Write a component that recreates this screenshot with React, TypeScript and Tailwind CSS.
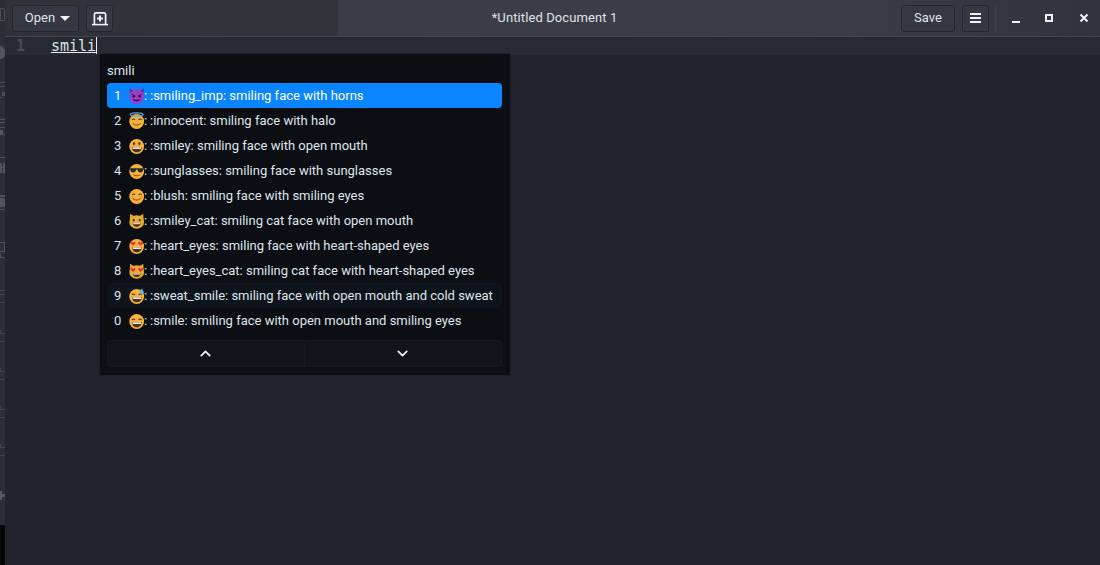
import { ChevronDown, ChevronUp } from "lucide-react";
import type { ReactNode } from "react";

const FaceBase = ({ children, fill = "#f7b23b" }: { children: ReactNode; fill?: string }) => (
  <svg viewBox="0 0 18 18" className="-mr-px h-[18px] w-[18px] shrink-0">
    <circle cx="8.7" cy="9.5" r="7.4" fill={fill} />
    {children}
  </svg>
);

const BigMouth = () => (
  <>
    <path d="M4 10.2h9.6c0 3-2 5-4.8 5s-4.8-2-4.8-5z" fill="#4a3320" />
    <path d="M4.6 10.4h8.4v1.5H4.6z" fill="#fff" />
  </>
);

const HappyEyes = () => (
  <path d="M4 8q1.5-2 3 0M10.6 8q1.5-2 3 0" fill="none" stroke="#4a3320" strokeWidth="1.1" />
);

const Hearts = () => (
  <path
    d="M5 8.8 2.7 6.6c-.9-1 .6-2.4 1.6-1.5l.7.6.7-.6c1-.9 2.5.5 1.6 1.5zM12.6 8.8l-2.3-2.2c-.9-1 .6-2.4 1.6-1.5l.7.6.7-.6c1-.9 2.5.5 1.6 1.5z"
    fill="#e8323c"
  />
);

const CatEars = ({ fill }: { fill: string }) => (
  <path d="M1.7 9 2.1 1.8 6.7 4.4h4l4.6-2.6L15.7 9z" fill={fill} />
);

const emojis: Record<string, ReactNode> = {
  smiling_imp: (
    <FaceBase fill="#9b3fc8">
      <path d="M2 6 1.4 1.6 5.4 3.6zM15.4 6l.6-4.4-4 2z" fill="#6a2a90" />
      <path d="M3.6 7.4 7.4 9M13.8 7.4 10 9" stroke="#3c1a55" strokeWidth="1" />
      <circle cx="5.6" cy="9.4" r="1.2" fill="#2d1440" />
      <circle cx="11.8" cy="9.4" r="1.2" fill="#2d1440" />
      <path d="M4.8 12.4q3.9 3.4 7.8 0q-3.9 1.2-7.8 0z" fill="#2d1440" stroke="#2d1440" strokeWidth=".5" />
    </FaceBase>
  ),
  innocent: (
    <FaceBase>
      <ellipse cx="8.7" cy="2.6" rx="6.4" ry="1.8" fill="none" stroke="#5ab4e8" strokeWidth="1.2" />
      <HappyEyes />
      <path d="M4.8 11.4q3.9 3.6 7.8 0" fill="none" stroke="#8a5a20" strokeWidth="1.1" />
    </FaceBase>
  ),
  smiley: (
    <FaceBase>
      <ellipse cx="6" cy="6.6" rx="1.1" ry="1.6" fill="#4a3320" />
      <ellipse cx="11.4" cy="6.6" rx="1.1" ry="1.6" fill="#4a3320" />
      <BigMouth />
    </FaceBase>
  ),
  sunglasses: (
    <FaceBase>
      <path d="M1.4 6.2h14.6v1.2l-.8.4c-.2 1.8-1.2 2.6-2.8 2.6-1.6 0-2.6-1-3-2.6H8.2c-.4 1.6-1.4 2.6-3 2.6-1.6 0-2.6-.8-2.8-2.6l-1-.4z" fill="#26292e" />
      <path d="M5.2 12.6q3.5 2.4 7 0" fill="none" stroke="#8a5a20" strokeWidth="1.1" />
    </FaceBase>
  ),
  blush: (
    <FaceBase>
      <HappyEyes />
      <circle cx="4" cy="10.4" r="1.3" fill="#f08a4a" opacity=".7" />
      <circle cx="13.4" cy="10.4" r="1.3" fill="#f08a4a" opacity=".7" />
      <path d="M4.8 11.4q3.9 3.6 7.8 0" fill="none" stroke="#8a5a20" strokeWidth="1.1" />
    </FaceBase>
  ),
  smiley_cat: (
    <svg viewBox="0 0 18 18" className="-mr-px h-[18px] w-[18px] shrink-0">
      <CatEars fill="#dca02c" />
      <ellipse cx="8.7" cy="10" rx="7.4" ry="6.8" fill="#e8ac34" />
      <ellipse cx="5.7" cy="8.2" rx="1" ry="1.4" fill="#4a3320" />
      <ellipse cx="11.7" cy="8.2" rx="1" ry="1.4" fill="#4a3320" />
      <path d="M4.7 11h8c0 2.4-1.8 3.8-4 3.8s-4-1.4-4-3.8z" fill="#4a3320" />
      <path d="M5.3 11.2h6.8v1H5.3z" fill="#fff" />
    </svg>
  ),
  heart_eyes: (
    <FaceBase>
      <BigMouth />
      <Hearts />
    </FaceBase>
  ),
  heart_eyes_cat: (
    <svg viewBox="0 0 18 18" className="-mr-px h-[18px] w-[18px] shrink-0">
      <CatEars fill="#dca02c" />
      <ellipse cx="8.7" cy="10" rx="7.4" ry="6.8" fill="#e8ac34" />
      <path d="M4.7 11.4h8c0 2.2-1.8 3.6-4 3.6s-4-1.4-4-3.6z" fill="#4a3320" />
      <path d="M5.3 11.5h6.8v1H5.3z" fill="#fff" />
      <g transform="translate(0 1.2)">
        <Hearts />
      </g>
    </svg>
  ),
  sweat_smile: (
    <FaceBase>
      <HappyEyes />
      <BigMouth />
      <path d="M13.8 1.4c.9 1.5 2 2.6 2 3.9a2 2 0 0 1-4 0c0-1.3 1.1-2.4 2-3.9z" fill="#5fb8ea" />
    </FaceBase>
  ),
  smile: (
    <FaceBase>
      <HappyEyes />
      <BigMouth />
    </FaceBase>
  ),
};

const rows = [
  { key: "1", emoji: "smiling_imp", text: ":smiling_imp: smiling face with horns", selected: true },
  { key: "2", emoji: "innocent", text: ":innocent: smiling face with halo" },
  { key: "3", emoji: "smiley", text: ":smiley: smiling face with open mouth" },
  { key: "4", emoji: "sunglasses", text: ":sunglasses: smiling face with sunglasses" },
  { key: "5", emoji: "blush", text: ":blush: smiling face with smiling eyes" },
  { key: "6", emoji: "smiley_cat", text: ":smiley_cat: smiling cat face with open mouth" },
  { key: "7", emoji: "heart_eyes", text: ":heart_eyes: smiling face with heart-shaped eyes" },
  { key: "8", emoji: "heart_eyes_cat", text: ":heart_eyes_cat: smiling cat face with heart-shaped eyes" },
  { key: "9", emoji: "sweat_smile", text: ":sweat_smile: smiling face with open mouth and cold sweat", hovered: true },
  { key: "0", emoji: "smile", text: ":smile: smiling face with open mouth and smiling eyes" },
];

const headerButton =
  "flex h-[27px] items-center justify-center rounded-[3px] border border-[#24262d] bg-[#353842] text-[13px] text-[#dfe2e7] shadow-[inset_0_0_0_1px_rgba(255,255,255,0.02)]";

function Desktop() {
  return (
    <div className="flex w-[5px] shrink-0 flex-col bg-[#2b2e35]">
      <svg viewBox="0 0 5 525" className="h-[525px] w-[5px]">
        <g fill="#5a5d64">
          <path d="M0 8h4v1H0zM0 9h1v12H0zM4 9h1v12H4zM0 20h5v1H0z" opacity=".7" />
          <path d="M0 46h2l3 4v6l-3 3H0z" opacity=".8" />
          <path d="M0 82h5v1H0zM0 86h5v1H0zM2 92h3v4H2zM0 97h2v1H0z" opacity=".7" />
          <path d="M0 119h5v1H0zM0 122h5v1H0zM0 127h5v1H0zM0 130h3v4H0zM0 134h5v1H0z" opacity=".8" />
          <path d="M0 157h5v1H0zM0 163h2v9H0zM3 163h2v9H3zM0 167h5v1H0zM0 172h5v1H0z" opacity=".8" />
          <path d="M0 195h5v2H0zM0 198h5v8H0zM0 206h5v1H0zM0 209h5v1H0z" opacity=".8" />
          <path d="M0 242h5v1H0zM4 243h1v9H4zM0 251h5v1H0zM0 254h1v3H0zM0 257h5v1H0z" opacity=".8" />
          <path d="M0 290h5v1H0zM0 294h5v1H0zM0 302h5v1H0z" opacity=".5" />
          <path d="M0 330h1v3h4v1H0zM0 341h5v1H0z" opacity=".5" />
          <path d="M0 368h1v3h4v1H0zM0 379h5v1H0z" opacity=".5" />
          <path d="M0 406h1v3h4v1H0zM0 417h5v1H0z" opacity=".5" />
          <path d="M0 444h1v3h4v1H0zM0 455h5v1H0z" opacity=".5" />
          <path d="M0 491h2v3h3v3H2v3H0z" opacity=".9" />
        </g>
      </svg>
      <div className="flex-1 bg-[#05060a]" />
    </div>
  );
}

function HeaderBar() {
  return (
    <header className="flex h-[37px] shrink-0 items-center border-b border-[#42454e] bg-[linear-gradient(90deg,#2f3239_0,#31343b_333px,#3a3d46_333px,#3b3e47_800px,#2f333b_100%)] pl-[7px]">
      <button className={`${headerButton} w-[67px] gap-[5px] pl-[4px]`}>
        Open
        <span className="h-0 w-0 border-x-[5px] border-t-[5px] border-x-transparent border-t-[#f0f1f3]" />
      </button>
      <button className={`${headerButton} ml-[7px] w-[27px]`}>
        <svg viewBox="0 0 16 16" className="h-4 w-4">
          <path d="M2.4 14V4.3a1.5 1.5 0 0 1 1.5-1.5h8.200a1.5 1.5 0 0 1 1.5 1.5V14" fill="none" stroke="#f0f1f3" strokeWidth="1.7" />
          <path d="M0 14.6h16" stroke="#f0f1f3" strokeWidth="1.6" fill="none" />
          <path d="M8 5.6v6M5 8.6h6" stroke="#f0f1f3" strokeWidth="2" fill="none" />
        </svg>
      </button>
      <div className="flex-1 pl-[95px] text-center text-[13px] tracking-[0.1px] text-[#dfe2e7]">*Untitled Document 1</div>
      <button className={`${headerButton} w-[54px]`}>Save</button>
      <button className={`${headerButton} ml-[7px] w-[27px]`}>
        <span className="flex w-[11px] flex-col gap-[2px]">
          <span className="h-[2px] bg-[#f0f1f3]" />
          <span className="h-[2px] bg-[#f0f1f3]" />
          <span className="h-[2px] bg-[#f0f1f3]" />
        </span>
      </button>
      <div className="ml-[6px] h-[27px] w-px bg-[#3c3f48]" />
      <div className="ml-[16px] flex items-center gap-x-[26px] pr-[11px]">
        <span className="mt-[8px] h-[2px] w-[8px] bg-[#f0f1f3]" />
        <span className="-ml-px h-[8px] w-[8px] border-2 border-[#f0f1f3]" />
        <svg viewBox="0 0 10 10" className="h-[10px] w-[10px]">
          <path d="M1.5 1.5l7 7M8.5 1.5l-7 7" stroke="#f0f1f3" strokeWidth="2" />
        </svg>
      </div>
    </header>
  );
}

function EmojiPopup() {
  return (
    <div className="absolute top-[17px] left-[95px] flex h-[321px] w-[410px] flex-col bg-[#0b0f14] pr-[8px] pl-[7px] font-['Roboto',sans-serif] text-[13px] text-[#dfe4ea] shadow-[0_0_0_1px_rgba(0,0,0,0.12)]">
      <div className="flex h-[29px] shrink-0 items-center pt-[4px]">smili</div>
      <div className="flex flex-col">
        {rows.map((row) => (
          <div
            key={row.key}
            className={`flex h-[25px] items-center rounded-[4px] pl-[7px] whitespace-nowrap ${
              row.selected ? "bg-[#0a84ff] text-white" : row.hovered ? "bg-[#0e141c]" : ""
            }`}
          >
            <span className="w-[14px] shrink-0">{row.key}</span>
            {emojis[row.emoji]}
            <span className="-ml-px w-[6px] shrink-0">:</span>
            <span>{row.text}</span>
          </div>
        ))}
      </div>
      <div className="mt-[7px] flex h-[27px] rounded-[3px] border border-[#151a21] bg-[#10151c]">
        <button className="flex flex-1 items-center justify-center border-r border-[#151a21] pr-[2px]">
          <ChevronUp size={17} strokeWidth={2.5} color="#eef0f3" />
        </button>
        <button className="flex flex-1 items-center justify-center pr-[2px]">
          <ChevronDown size={17} strokeWidth={2.5} color="#eef0f3" />
        </button>
      </div>
    </div>
  );
}

export default function App() {
  return (
    <div className="flex h-[565px] w-[1100px] overflow-hidden bg-[#21242c] font-['Roboto',sans-serif]">
      <Desktop />
      <div className="flex min-w-0 flex-1 flex-col">
        <HeaderBar />
        <main className="relative flex-1 bg-[#21242c]">
          <div className="flex h-[18px] items-start bg-[#262a32] font-['DejaVu_Sans_Mono',monospace] text-[15px]">
            <span className="w-[46px] pr-[26px] text-right leading-[18px] font-bold text-[#464b55]">1</span>
            <span className="h-[17px] border-r border-[#e8eaed] text-[#dfe2e7]">
              <span className="block border-b border-[#e8eaed] pt-[3px] leading-[12px]">smili</span>
            </span>
          </div>
          <EmojiPopup />
        </main>
      </div>
    </div>
  );
}
